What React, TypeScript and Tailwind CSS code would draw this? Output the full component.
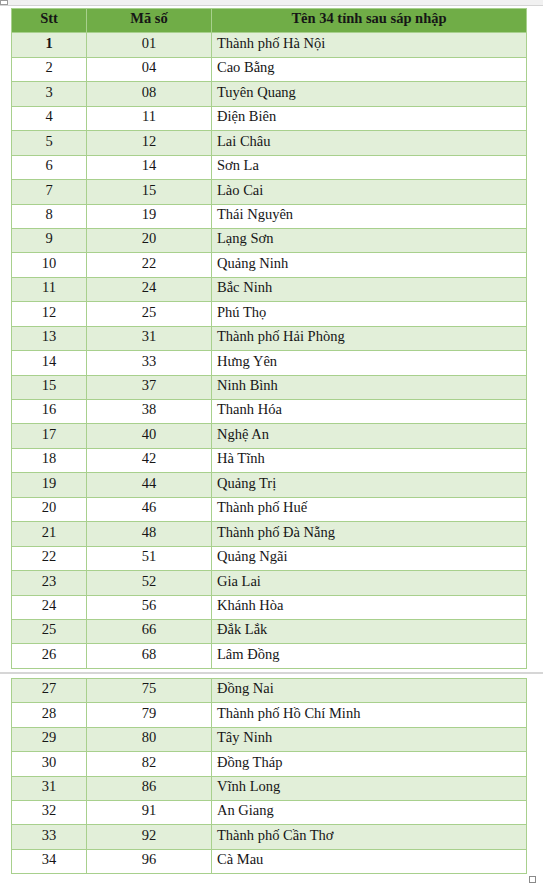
import React from 'react';

// Danh sách 34 tỉnh sau sáp nhập
const rows1: [string, string, string][] = [
  ['1', '01', 'Thành phố Hà Nội'],
  ['2', '04', 'Cao Bằng'],
  ['3', '08', 'Tuyên Quang'],
  ['4', '11', 'Điện Biên'],
  ['5', '12', 'Lai Châu'],
  ['6', '14', 'Sơn La'],
  ['7', '15', 'Lào Cai'],
  ['8', '19', 'Thái Nguyên'],
  ['9', '20', 'Lạng Sơn'],
  ['10', '22', 'Quảng Ninh'],
  ['11', '24', 'Bắc Ninh'],
  ['12', '25', 'Phú Thọ'],
  ['13', '31', 'Thành phố Hải Phòng'],
  ['14', '33', 'Hưng Yên'],
  ['15', '37', 'Ninh Bình'],
  ['16', '38', 'Thanh Hóa'],
  ['17', '40', 'Nghệ An'],
  ['18', '42', 'Hà Tĩnh'],
  ['19', '44', 'Quảng Trị'],
  ['20', '46', 'Thành phố Huế'],
  ['21', '48', 'Thành phố Đà Nẵng'],
  ['22', '51', 'Quảng Ngãi'],
  ['23', '52', 'Gia Lai'],
  ['24', '56', 'Khánh Hòa'],
  ['25', '66', 'Đắk Lắk'],
  ['26', '68', 'Lâm Đồng'],
];

const rows2: [string, string, string][] = [
  ['27', '75', 'Đồng Nai'],
  ['28', '79', 'Thành phố Hồ Chí Minh'],
  ['29', '80', 'Tây Ninh'],
  ['30', '82', 'Đồng Tháp'],
  ['31', '86', 'Vĩnh Long'],
  ['32', '91', 'An Giang'],
  ['33', '92', 'Thành phố Cần Thơ'],
  ['34', '96', 'Cà Mau'],
];

const cell = 'border border-[#a8d08d] p-0 pb-[4px] leading-none';

const Row = ({ r, shaded }: { r: string[]; shaded: boolean }) => (
  <tr className={`h-[24.45px] ${shaded ? 'bg-[#e2efd9]' : 'bg-white'}`}>
    <td className={`${cell} text-center ${r[0] === '1' ? 'font-bold' : ''}`}>{r[0]}</td>
    <td className={`${cell} text-center`}>{r[1]}</td>
    <td className={`${cell} text-left pl-[5px]`}>{r[2]}</td>
  </tr>
);

const Cols = () => (
  <colgroup>
    <col className="w-[75px]" />
    <col className="w-[125px]" />
    <col />
  </colgroup>
);

export default function App() {
  return (
    <div className="relative min-h-[884px] bg-white text-[14.5px] text-[#161616] [font-family:'Liberation_Serif','Times_New_Roman',serif]">
      <div className="h-[6px] bg-[#f1f1f1] border-b border-[#d4d4d4]" />
      <div className="absolute left-0 top-0 w-[8px] h-[5px] border border-[#9a9a9a] bg-white" />
      <div className="pl-[11px] pt-[2px]">
        <table className="w-[516px] table-fixed border-collapse">
          <Cols />
          <thead>
            <tr className="h-[24.45px] bg-[#70ad47]">
              <th className={`${cell} font-bold text-center`}>Stt</th>
              <th className={`${cell} font-bold text-center`}>Mã số</th>
              <th className={`${cell} font-bold text-center`}>Tên 34 tỉnh sau sáp nhập</th>
            </tr>
          </thead>
          <tbody>
            {rows1.map((r, i) => (
              <Row key={r[0]} r={r} shaded={i % 2 === 0} />
            ))}
          </tbody>
        </table>
      </div>
      <div className="h-[9px] flex items-center">
        <div className="w-full h-[2px] bg-[#d6d6d6]" />
      </div>
      <div className="pl-[11px]">
        <table className="w-[516px] table-fixed border-collapse">
          <Cols />
          <tbody>
            {rows2.map((r, i) => (
              <Row key={r[0]} r={r} shaded={i % 2 === 0} />
            ))}
          </tbody>
        </table>
      </div>
      <div className="absolute left-[529px] top-[876px] w-[7px] h-[7px] border border-[#8a8a8a] bg-white" />
    </div>
  );
}
